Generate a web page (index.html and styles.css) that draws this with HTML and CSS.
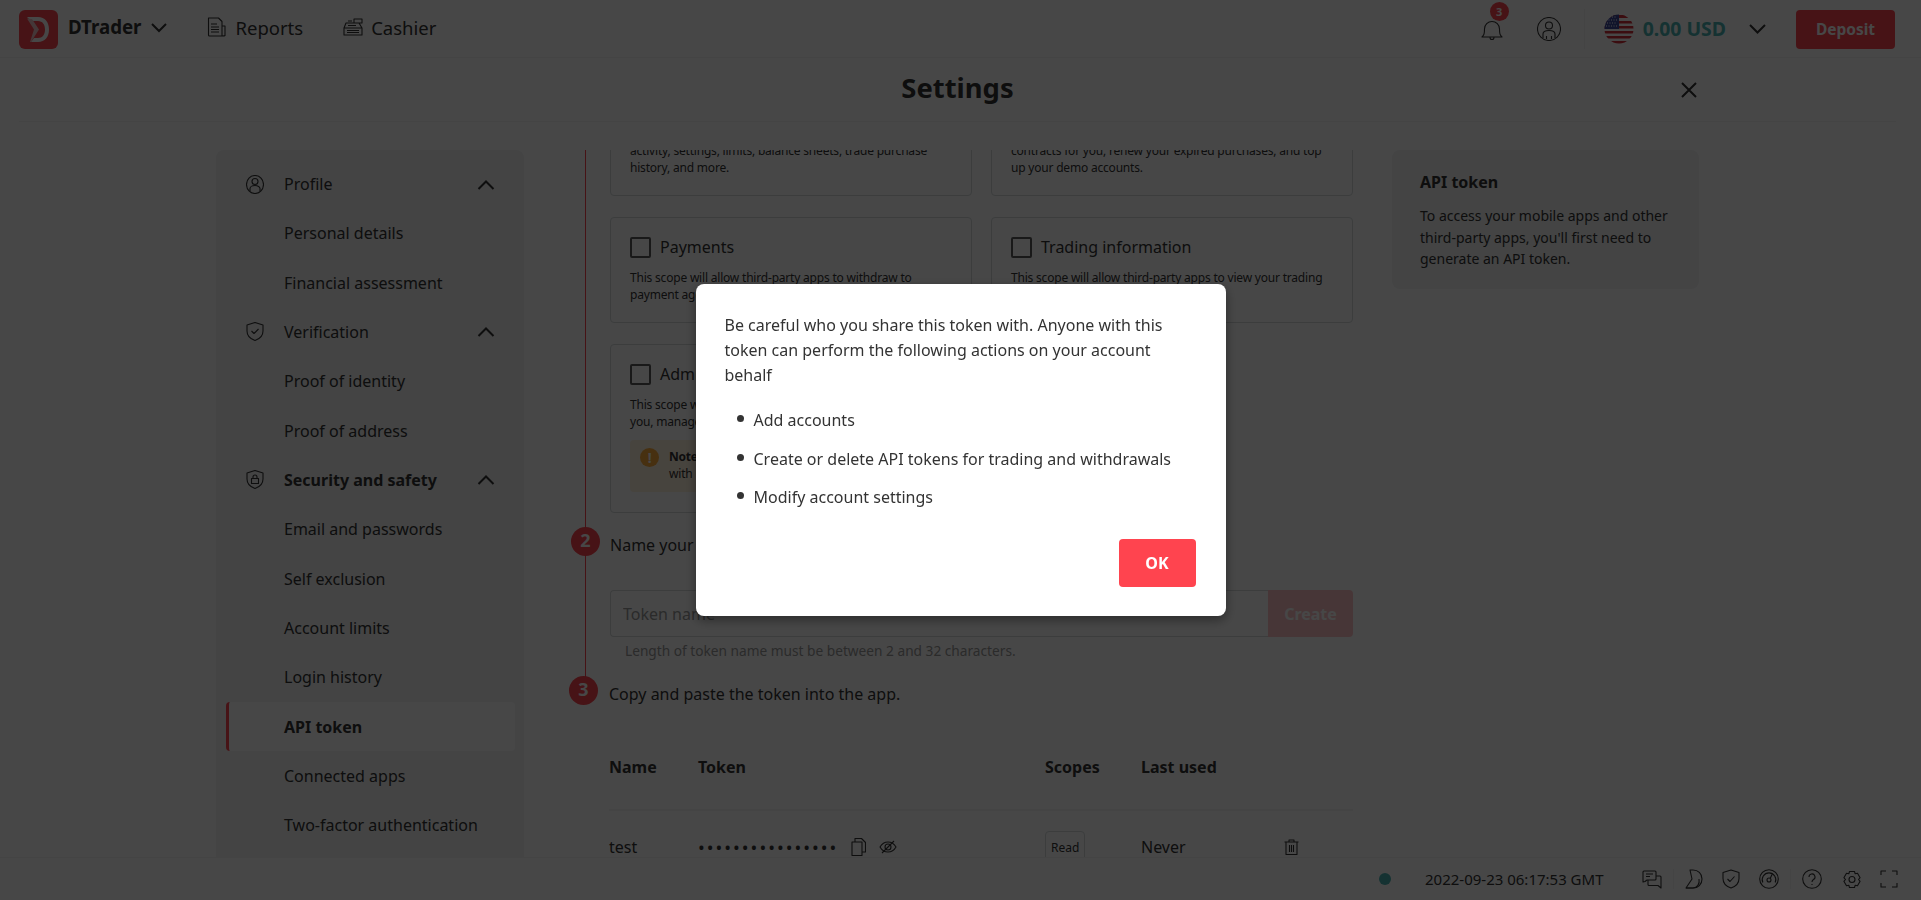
FILE: index.html
```html
<!DOCTYPE html>
<html lang="en">
<head>
  <meta charset="UTF-8" />
  <title>DTrader | Settings</title>
  <link rel="stylesheet" href="styles.css">
</head>
<body>
  <div class="app">
    <header class="topbar">
      <div class="logo">
        <svg width="39" height="39" viewBox="0 0 39 39"><rect width="39" height="39" rx="6" fill="#ff444f"/><path d="M8 7h11c7 0 11 5 11 12.500S26 32 19 32h-7l3-4h4c4.500 0 7-3.500 7-8.500S23.500 11 19 11h-7z" fill="#fff"/><path d="M8 8.500l5 .5 7 10.500L12 32h-1l4-12.500z" fill="#f3c6c8"/></svg>
      </div>
      <span class="brand">DTrader</span>
      <svg class="chev brand-chev" width="16" height="10" viewBox="0 0 16 10"><path d="M1 1l7 7 7-7"/></svg>
      <a class="nav-link nav-reports">
        <svg class="ico" width="20" height="20" viewBox="0 0 20 20"><path d="M15 19H2.500a1 1 0 0 1-1-1V1h10l3.500 3.500V19c1.500 0 3.500 0 3-1V9h-3M4 7h6M4 10h8M4 12.500h8M4 15h8"/></svg>
        Reports
      </a>
      <a class="nav-link">
        <svg class="ico" width="20" height="20" viewBox="0 0 20 20"><path d="M1 11l2-5h13l3 5v7H1zM1 11h18M11 2h8v4h-8zM5 8.500h8M4 13.500h12M4 15.500h12M5 4h4"/></svg>
        Cashier
      </a>
      <div class="topbar-right">
        <div class="bell">
          <svg class="ico" width="24" height="24" viewBox="0 0 24 24"><path d="M2 20c2-2 2.500-3 2.500-8a7.500 7.500 0 0 1 15 0c0 5 .5 6 2.500 8zM10 20.500a2 2 0 0 0 4 0"/></svg>
          <span class="badge">3</span>
        </div>
        <svg class="ico user-ico" width="24" height="24" viewBox="0 0 24 24"><circle cx="12" cy="12" r="11.500"/><circle cx="12" cy="8.500" r="3.500"/><path d="M6 21v-4c0-2 2-3.500 6-3.500s6 1.500 6 3.500v4M9.500 22v-3M14.500 22v-3"/></svg>
        <span class="divider"></span>
        <svg class="flag" width="30" height="30" viewBox="0 0 30 30">
          <defs><clipPath id="flagclip"><circle cx="15" cy="15" r="14.500"/></clipPath></defs>
          <g clip-path="url(#flagclip)">
            <rect width="30" height="30" fill="#fff"/>
            <path d="M0 1h30v3H0zM0 7h30v2.500H0zM0 12h30v2.500H0zM0 17h30v2.500H0zM0 22h30v2.500H0zM0 27h30v3H0z" fill="#d22f3a"/>
            <rect width="15" height="15" fill="#3f4a9a"/>
            <path d="M3 3h9M2 6h11M3 9h9M2 12h11" stroke="#fff" stroke-width="1" stroke-dasharray="1 1.500"/>
          </g>
        </svg>
        <span class="balance">0.00 USD</span>
        <svg class="chev bal-chev" width="17" height="10" viewBox="0 0 17 10"><path d="M1 1l7.500 7.500L16 1"/></svg>
        <button class="deposit">Deposit</button>
      </div>
    </header>

    <div class="title-row">
      <h1>Settings</h1>
      <svg class="close" width="16" height="16" viewBox="0 0 16 16"><path d="M1 1l14 14M15 1L1 15"/></svg>
    </div>

    <main class="main">
      <nav class="sidebar">
        <div class="side-item side-head">
          <svg class="ico side-ico" width="18" height="19" viewBox="0 0 18 19"><ellipse cx="9" cy="9.500" rx="8.500" ry="9"/><circle cx="9" cy="6.500" r="3"/><path d="M4 16v-2.500C4 12 6 10.500 9 10.500s5 1.500 5 3V16"/></svg>
          Profile
          <svg class="chev-up" width="18" height="10" viewBox="0 0 18 10"><path d="M1.500 9L9 1.500 16.500 9"/></svg>
        </div>
        <div class="side-item">Personal details</div>
        <div class="side-item">Financial assessment</div>
        <div class="side-item side-head">
          <svg class="ico side-ico" width="18" height="19" viewBox="0 0 18 19"><path d="M9 .5l8 2.500v6c0 5-3.500 8-8 9.500-4.500-1.500-8-4.500-8-9.500V3zM5.500 9l2.500 2.500L12.500 7"/></svg>
          Verification
          <svg class="chev-up" width="18" height="10" viewBox="0 0 18 10"><path d="M1.500 9L9 1.500 16.500 9"/></svg>
        </div>
        <div class="side-item">Proof of identity</div>
        <div class="side-item">Proof of address</div>
        <div class="side-item side-head side-bold">
          <svg class="ico side-ico" width="18" height="19" viewBox="0 0 18 19"><path d="M9 .5l8 2.500v6c0 5-3.500 8-8 9.500-4.500-1.500-8-4.500-8-9.500V3zM5.500 8.500h7v5h-7zM7 8.500V7a2 2 0 0 1 4 0v1.500"/></svg>
          Security and safety
          <svg class="chev-up" width="18" height="10" viewBox="0 0 18 10"><path d="M1.500 9L9 1.500 16.500 9"/></svg>
        </div>
        <div class="side-item">Email and passwords</div>
        <div class="side-item">Self exclusion</div>
        <div class="side-item">Account limits</div>
        <div class="side-item">Login history</div>
        <div class="side-item side-active">API token</div>
        <div class="side-item">Connected apps</div>
        <div class="side-item">Two-factor authentication</div>
      </nav>

      <section class="pane">
        <div class="steps">
          <div class="scope-grid">
            <div class="scope">
              <div class="scope-title"><span class="check"></span>Read</div>
              <p>This scope will allow third-party apps to view your account activity, settings, limits, balance sheets, trade purchase history, and more.</p>
            </div>
            <div class="scope">
              <div class="scope-title"><span class="check"></span>Trade</div>
              <p>This scope will allow third-party apps to buy and sell contracts for you, renew your expired purchases, and top up your demo accounts.</p>
            </div>
            <div class="scope">
              <div class="scope-title"><span class="check"></span>Payments</div>
              <p>This scope will allow third-party apps to withdraw to payment agents and make inter-account transfers for you.</p>
            </div>
            <div class="scope">
              <div class="scope-title"><span class="check"></span>Trading information</div>
              <p>This scope will allow third-party apps to view your trading history.</p>
            </div>
            <div class="scope scope-admin">
              <div class="scope-title"><span class="check"></span>Admin</div>
              <p>This scope will allow third-party apps to open accounts for you, manage your settings and token usage, and more.</p>
              <div class="note">
                <span class="note-ico">!</span>
                <div class="note-text"><b>Note:</b> Do not share tokens with the Admin scope<br>with unauthorised parties.</div>
              </div>
            </div>
          </div>
          <div class="step-row step-two"><span class="step-num">2</span>Name your token</div>
          <div class="token-form">
            <input class="token-input" type="text" placeholder="Token name">
            <button class="create">Create</button>
          </div>
          <div class="hint">Length of token name must be between 2 and 32 characters.</div>
        </div>
        <div class="step-row step-three"><span class="step-num">3</span>Copy and paste the token into the app.</div>

        <div class="tokens">
          <div class="token-row token-head">
            <span>Name</span><span>Token</span><span>Scopes</span><span>Last used</span><span></span>
          </div>
          <div class="token-row token-body">
            <span>test</span>
            <span class="token-val">
              <span class="dots">••••••••••••••••</span>
              <svg class="ico" width="15" height="18" viewBox="0 0 15 18"><path d="M1 4h10v13.500H1zM4 4V.5h6.500l4 4V14H11"/></svg>
              <svg class="ico" width="18" height="14" viewBox="0 0 18 14"><path d="M1 7c2-3.500 5-5 8-5s6 1.500 8 5c-2 3.500-5 5-8 5s-6-1.500-8-5zM3 13L15 1"/><circle cx="9" cy="7" r="3"/></svg>
            </span>
            <span><span class="chip">Read</span></span>
            <span>Never</span>
            <svg class="ico" width="15" height="16" viewBox="0 0 15 16"><path d="M.5 3h14M5 3V1h5v2M2 3v12.500h11V3M5.500 6v7M7.500 6v7M9.500 6v7"/></svg>
          </div>
        </div>
      </section>

      <aside class="info">
        <h3>API token</h3>
        <p>To access your mobile apps and other third-party apps, you'll first need to generate an API token.</p>
      </aside>
    </main>

    <footer class="footer">
      <span class="status-dot"></span>
      <span class="clock">2022-09-23 06:17:53 GMT</span>
      <svg class="ico f1" width="20" height="19" viewBox="0 0 20 19"><path d="M2 1h11a1 1 0 0 1 1 1v7a1 1 0 0 1-1 1H5l-2 1.500L1 12V2a1 1 0 0 1 1-1zM4 4h7M4 6.500h4M14 6h4a1 1 0 0 1 1 1v11l-3-2.500H7a1 1 0 0 1-1-1V10"/></svg>
      <span class="foot-sep"></span>
      <svg class="ico f2" width="18" height="20" viewBox="0 0 18 20"><path d="M5 1h3c5 0 9 3.500 9 9s-4 9-9 9H1l6-9z"/><path d="M1 19h7c4 0 7-4 6-9"/></svg>
      <svg class="ico f3" width="18" height="20" viewBox="0 0 18 20"><path d="M9 1l8 2.500v6c0 5-3.500 8-8 9.500-4.500-1.500-8-4.500-8-9.500v-6zM5.500 10l2.500 2.500L12.500 7.500"/></svg>
      <svg class="ico f4" width="20" height="20" viewBox="0 0 20 20"><circle cx="10" cy="10" r="9.300"/><circle cx="10" cy="11" r="2"/><path d="M3.800 13.500a6.800 6.800 0 1 1 12.400 0M11.200 9.500L13 5.500"/></svg>
      <span class="foot-sep"></span>
      <svg class="ico f5" width="20" height="20" viewBox="0 0 20 20"><circle cx="10" cy="10" r="9.300"/><path d="M7 8a3 3 0 1 1 4.500 2.500c-1 .6-1.500 1-1.500 2.500M10 15v1"/></svg>
      <svg class="ico f6" width="18" height="19" viewBox="0 0 18 19"><path d="M6.500 1.500h5l.7 2.300 2.300-.6 2.600 4.500-1.600 1.800 1.600 1.800-2.600 4.500-2.300-.6-.7 2.300h-5l-.7-2.300-2.300.6L.9 11.300l1.600-1.800L.9 7.700l2.600-4.500 2.300.6z"/><circle cx="9" cy="9.500" r="3"/></svg>
      <svg class="ico f7" width="18" height="18" viewBox="0 0 18 18"><path d="M1 5V1h5M12 1h5v4M17 13v4h-5M6 17H1v-4"/></svg>
    </footer>
  </div>

  <div class="overlay">
    <div class="dialog">
      <p>Be careful who you share this token with. Anyone with this token can perform the following actions on your account behalf</p>
      <ul>
        <li>Add accounts</li>
        <li>Create or delete API tokens for trading and withdrawals</li>
        <li>Modify account settings</li>
      </ul>
      <div class="dialog-foot"><button class="ok">OK</button></div>
    </div>
  </div>
</body>
</html>
```

FILE: styles.css
```css
:root {
  --red: #ff444f; --fg: #333; --line: #f2f3f4; --card: #f2f3f4; --border: #d6dadb;
}
html, body {
  margin: 0; padding: 0; height: 100%;
  font-family: 'Noto Sans', sans-serif;
  color: var(--fg); background: #fff; overflow: hidden;
}
.app { height: 900px; display: flex; flex-direction: column; }
.ico { fill: none; stroke: #333; stroke-width: 1.100; stroke-linejoin: round; flex: none; }
.chev, .chev-up { fill: none; stroke: #333; stroke-width: 2; flex: none; }

/* top bar */
.topbar { height: 57px; border-bottom: 1px solid var(--line); display: flex; align-items: center; padding: 0 26px 0 19px; flex: none; }
.logo { height: 39px; width: 39px; margin-top: 1px; }
.brand { font-weight: 700; font-size: 18.700px; margin-left: 10px; margin-top: -4px; }
.brand-chev { margin-left: 10px; margin-right: 40px; margin-top: -2px; }
.nav-link { display: flex; align-items: center; font-size: 18.500px; gap: 8px; margin-right: 38px; margin-top: -3px; }
.nav-reports { margin-right: 40px; }
.topbar-right { margin-left: auto; display: flex; align-items: center; }
.bell { position: relative; height: 24px; margin-right: 33px; }
.badge { position: absolute; top: -15px; left: 10px; width: 19px; height: 19px; border-radius: 50%; background: var(--red); color: #fff; font-size: 11px; font-weight: 700; text-align: center; line-height: 19px; }
.user-ico { margin-right: 23px; }
.divider { width: 1px; height: 40px; background: var(--line); margin-right: 19px; }
.flag { margin-right: 9px; }
.balance { color: #4bb4b3; font-weight: 700; font-size: 19.400px; margin-right: 23px; }
.bal-chev { margin-right: 30px; }
.deposit { width: 99px; height: 39px; margin-top: 1px; background: var(--red); border: none; border-radius: 4px; color: #fff; font: 700 15.500px 'Noto Sans', sans-serif; }

/* title */
.title-row { height: 63px; margin: 0 25px 0 19px; border-bottom: 1px solid var(--line); display: flex; align-items: center; justify-content: center; position: relative; flex: none; }
h1 { margin: -4px 0 0 0; font-size: 27.400px; font-weight: 700; }
.close { position: absolute; right: 199px; top: 24px; fill: none; stroke: #333; stroke-width: 2; }

/* main columns */
.main { flex: 1; min-height: 0; display: flex; padding: 28px 0 0 216px; overflow: hidden; }
.sidebar { width: 308px; flex: none; background: var(--card); border-radius: 8px 8px 0 0; padding-top: 9.500px; box-sizing: border-box; }
.side-item { height: 49.330px; display: flex; align-items: center; padding-left: 58px; font-size: 16px; margin: 0 9px 0 10px; position: relative; }
.side-ico { position: absolute; left: 20px; top: 15px; }
.chev-up { position: absolute; right: 20px; top: 20px; }
.side-bold, .side-active { font-weight: 700; }
.side-active { background: #fff; border-left: 3px solid var(--red); padding-left: 55px; border-radius: 4px; }

.pane { width: 832px; margin-left: 36px; flex: none; overflow: hidden; }
.steps { margin: -77px 39px 0 25px; border-left: 1px solid var(--red); padding-left: 24px; padding-bottom: 14px; }
.scope-grid { display: grid; grid-template-columns: 362px 362px; grid-template-rows: 123px 106px 169px; gap: 21px 19px; }
.scope { border: 1px solid var(--border); border-radius: 4px; padding: 19px 19px 0; box-sizing: border-box; }
.scope-title { display: flex; align-items: center; font-size: 16px; height: 20px; }
.check { width: 17px; height: 17px; border: 2px solid #5c5c5c; border-radius: 2px; margin-right: 9px; flex: none; }
.scope p { margin: 12px 0 0; font-size: 12px; line-height: 17px; letter-spacing: -.2px; }
.note { margin-top: 10px; height: 52px; background: rgba(255,173,58,.16); border-radius: 4px; display: flex; gap: 10px; padding: 8px 10px; box-sizing: border-box; font-size: 12px; line-height: 17px; letter-spacing: -.2px; }
.note-text { white-space: nowrap; }
.note-ico { width: 19px; height: 19px; border-radius: 50%; background: #ffad3a; color: #fff; font-size: 14px; font-weight: 700; text-align: center; line-height: 19px; flex: none; }
.step-row { position: relative; height: 30px; display: flex; align-items: center; font-size: 16px; }
.step-two { margin-top: 17px; }
.step-num { position: absolute; width: 29px; height: 29px; border-radius: 50%; background: var(--red); color: #fff; font-size: 18px; font-weight: 700; text-align: center; line-height: 27px; left: -39px; top: -3px; }
.step-three { margin: 0 39px 0 49px; }
.step-three .step-num { left: -40px; }
.token-form { display: flex; margin-top: 30px; height: 47px; }
.token-input { flex: 1; border: 1px solid var(--border); border-right: none; border-radius: 4px 0 0 4px; padding: 0 12px; font: 16px 'Noto Sans', sans-serif; outline: none; }
.token-input::placeholder { color: #999; }
.create { width: 85px; border: none; background: var(--red); opacity: .32; border-radius: 0 4px 4px 0; color: #fff; font: 700 16px 'Noto Sans', sans-serif; }
.hint { height: 28px; line-height: 28px; padding-left: 15px; font-size: 13.700px; color: #999; }

.tokens { margin: 38px 39px 0 49px; }
.token-row { display: grid; grid-template-columns: 89px 347px 96px 143px 1fr; align-items: center; font-size: 16px; }
.token-head { font-weight: 700; height: 40px; padding-bottom: 22px; border-bottom: 2px solid var(--line); }
.token-body { height: 72px; }
.token-val { display: flex; align-items: center; gap: 13px; }
.dots { letter-spacing: 2px; font-size: 18px; line-height: 20px; }
.chip { display: inline-block; border: 1px solid var(--border); border-radius: 4px; font-size: 12px; padding: 7px 5px; }

.info { width: 307px; height: 139px; box-sizing: border-box; flex: none; background: var(--card); border-radius: 8px; padding: 22px 28px; }
.info h3 { margin: 0; font-size: 16px; line-height: 20px; font-weight: 700; }
.info p { margin: 13px 0 0; font-size: 14px; line-height: 21.500px; }

/* footer */
.footer { height: 42px; border-top: 1px solid var(--line); background: #fff; display: flex; align-items: center; padding-right: 23px; justify-content: flex-end; flex: none; position: relative; }
.status-dot { width: 12px; height: 12px; border-radius: 50%; background: #4bb4b3; margin-right: 34px; }
.clock { font-size: 15px; margin-right: 38px; }
.foot-sep { width: 1px; height: 20px; background: var(--line); margin: 0 11px; }
.f2 { margin-right: 19.500px; }
.f3 { margin-right: 19px; }
.f5 { margin-right: 21px; }
.f6 { margin-right: 19px; }

/* dialog */
.overlay { position: fixed; inset: 0; background: rgba(0,0,0,.72); display: flex; align-items: center; justify-content: center; }
.dialog { width: 530px; height: 332px; background: #fff; border-radius: 8px; box-shadow: 0 4px 12px rgba(0,0,0,.4); padding: 29px 30px 0 29px; box-sizing: border-box; font-size: 16px; }
.dialog p { margin: 0; line-height: 25px; }
.dialog ul { margin: 13px 0 0; padding: 0 0 0 12px; list-style: none; }
.dialog li { height: 38.500px; display: flex; align-items: center; gap: 10px; }
.dialog li::before { content: ''; width: 7px; height: 7px; border-radius: 50%; background: #333; margin-top: -3px; }
.dialog-foot { display: flex; justify-content: flex-end; margin: 22px 0 0; }
.ok { width: 77px; height: 48px; background: var(--red); border: none; border-radius: 4px; color: #fff; font: 700 16px 'Noto Sans', sans-serif; }
```
